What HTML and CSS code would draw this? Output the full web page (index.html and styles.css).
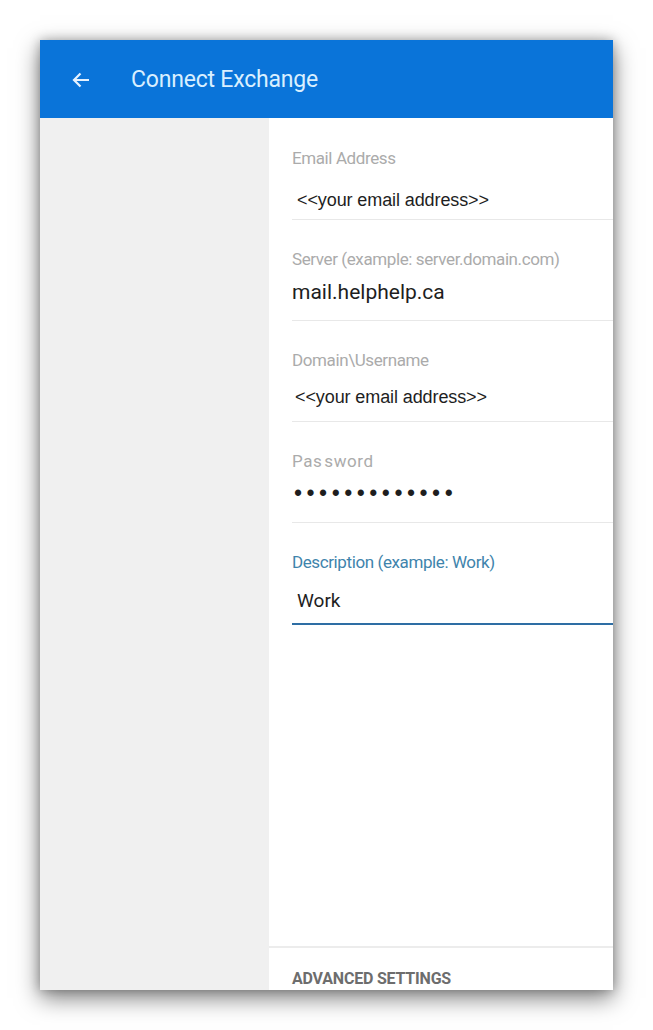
FILE: index.html
```html
<!DOCTYPE html>
<html>
<head>
<meta charset="utf-8">
<link rel="stylesheet" href="styles.css">
</head>
<body>
<div class="frame">
  <header class="appbar">
    <svg class="back" width="18" height="16" viewBox="0 0 18 16"><path d="M17 8H2M8.5 1.5L2 8l6.5 6.5" fill="none" stroke="#e6f2ff" stroke-width="2.2"/></svg>
    <h1 class="title">Connect Exchange</h1>
  </header>
  <div class="content">
    <aside class="side"></aside>
    <main class="main">
      <form class="form">
        <div class="field">
          <label class="label">Email Address</label>
          <div class="value value-email">&lt;&lt;your email address&gt;&gt;</div>
        </div>
        <div class="field">
          <label class="label">Server (example: server.domain.com)</label>
          <div class="value value-server">mail.helphelp.ca</div>
        </div>
        <div class="field">
          <label class="label">Domain\Username</label>
          <div class="value value-user">&lt;&lt;your email address&gt;&gt;</div>
        </div>
        <div class="field">
          <label class="label label-pass">Pas sword</label>
          <div class="value value-pass">•••••••••••••</div>
        </div>
        <div class="field field-active">
          <label class="label label-active">Description (example: Work)</label>
          <div class="value value-desc">Work</div>
        </div>
      </form>
      <div class="advanced">ADVANCED SETTINGS</div>
    </main>
  </div>
</div>
</body>
</html>
```

FILE: styles.css
```css
html, body {
  margin: 0;
  padding: 0;
  background: #ffffff;
}
body {
  width: 653px;
  height: 1030px;
  overflow: hidden;
  font-family: Roboto, "Liberation Sans", sans-serif;
}
.frame {
  margin: 40px 0 0 40px;
  width: 573px;
  height: 950px;
  display: flex;
  flex-direction: column;
  box-shadow: 0 8px 22px rgba(0, 0, 0, 0.5), 0 0 10px rgba(0, 0, 0, 0.25);
  background: #fff;
  overflow: hidden;
}
.appbar {
  height: 78px;
  flex: none;
  background: #0a74d9;
  display: flex;
  align-items: center;
  padding-left: 32px;
}
.back {
  display: block;
  margin-top: 1px;
}
.title {
  margin: 0 0 0 41px;
  font-weight: 400;
  font-size: 23px;
  color: #d9efff;
  letter-spacing: -0.2px;
}
.content {
  flex: 1;
  display: flex;
  min-height: 0;
}
.side {
  width: 229px;
  flex: none;
  background: #f0f0f0;
}
.main {
  flex: 1;
  display: flex;
  flex-direction: column;
  padding-top: 1px;
}
.form {
  flex: 1;
  padding-left: 23px;
}
.field {
  height: 101px;
  box-sizing: border-box;
  border-bottom: 1px solid #e8e8e8;
  padding-top: 29px;
}
.label {
  display: block;
  font-size: 17px;
  line-height: 20px;
  color: #ababab;
  letter-spacing: -0.4px;
}
.label-pass {
  letter-spacing: 0.6px;
  word-spacing: -3px;
}
.label-active {
  color: #3f84ac;
}
.value {
  font-family: "Liberation Sans", Arial, sans-serif;
  font-size: 18px;
  line-height: 24px;
  color: #1e1e1e;
  margin-top: 15px;
  letter-spacing: -0.1px;
}
.value-email {
  padding-left: 5px;
  margin-top: 20px;
}
.value-server {
  font-family: Roboto, sans-serif;
  font-size: 21px;
  margin-top: 11px;
  padding-left: 0;
  letter-spacing: 0;
}
.value-user {
  padding-left: 3px;
}
.value-pass {
  padding-left: 2px;
  margin-top: 10px;
  font-size: 23px;
  letter-spacing: 4.5px;
}
.field-active {
  border-bottom: 2px solid #2e6ea4;
  height: 102px;
}
.value-desc {
  padding-left: 5px;
  margin-top: 17px;
  font-family: Roboto, sans-serif;
  font-size: 19px;
  letter-spacing: 0;
}
.advanced {
  flex: none;
  height: 44px;
  box-sizing: border-box;
  overflow: hidden;
  border-top: 2px solid #ececec;
  padding-left: 23px;
  padding-top: 21px;
  font-size: 16px;
  font-weight: 700;
  color: #6d6d6d;
  letter-spacing: -0.2px;
  line-height: 20px;
}
```
